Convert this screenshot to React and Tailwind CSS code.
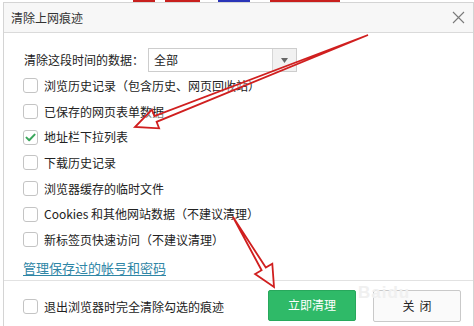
import React from "react";

const font = { fontFamily: '"Noto Sans CJK SC", "Noto Sans", sans-serif' };

function Box({ checked }) {
  return (
    <div className="w-[15px] h-[15px] shrink-0 rounded-[3px] border border-[#c4c4c4] bg-white flex items-center justify-center">
      {checked && (
        <svg width="11" height="9" viewBox="0 0 11 9">
          <path d="M1.5 4.6 L4.2 7.2 L9.6 1.6" fill="none" stroke="#3aa65c" strokeWidth="2" strokeLinecap="round" strokeLinejoin="round" />
        </svg>
      )}
    </div>
  );
}

function Row({ checked, children }) {
  return (
    <div className="h-[25.7px] flex items-center">
      <Box checked={checked} />
      <span className="ml-[6px] text-[12px] text-[#222] leading-none whitespace-nowrap">{children}</span>
    </div>
  );
}

export default function App() {
  const rows = [
    ["浏览历史记录（包含历史、网页回收站）", false],
    ["已保存的网页表单数据", false],
    ["地址栏下拉列表", true],
    ["下载历史记录", false],
    ["浏览器缓存的临时文件", false],
    ["Cookies 和其他网站数据（不建议清理）", false],
    ["新标签页快速访问（不建议清理）", false],
  ];
  return (
    <div className="w-[474px] h-[326px] overflow-hidden bg-white relative" style={font}>
      <div className="h-[2px] flex">
        <div className="w-[133px]" />
        <div className="w-[22px] bg-[#c8201e]" />
        <div className="w-[10px]" />
        <div className="w-[35px] bg-[#c8201e]" />
        <div className="w-[18px]" />
        <div className="w-[32px] bg-[#2a35b8]" />
        <div className="w-[20px]" />
        <div className="w-[70px] bg-[#c8201e]" />
      </div>
      <div className="ml-[3px] w-[471px] h-[324px] border border-b-0 border-[#d4d4d4] bg-white flex flex-col">
        <div className="h-[30px] shrink-0 bg-[#f7f7f7] border-b border-[#dadada] flex items-center justify-between pl-[7px] pr-[8px]">
          <span className="text-[12px] text-[#333] leading-none">清除上网痕迹</span>
          <svg width="13" height="13" viewBox="0 0 13 13">
            <path d="M1 1 L12 12 M12 1 L1 12" stroke="#7a7a7a" strokeWidth="1.1" />
          </svg>
        </div>
        <div className="pl-[19px] pt-[15px]">
          <div className="h-[24px] flex items-center">
            <span className="w-[125px] pl-[1px] text-[12px] text-[#222] leading-none whitespace-nowrap">清除这段时间的数据：</span>
            <div className="w-[149px] h-[24px] border border-[#cdcdcd] flex items-stretch bg-white">
              <div className="flex-1 flex items-center pl-[5px] text-[12px] text-[#222]">全部</div>
              <div className="w-[24px] bg-[#f1f1f1] border-l border-[#d6d6d6] flex items-center justify-center">
                <svg width="7" height="5" viewBox="0 0 7 5">
                  <path d="M0 0 L7 0 L3.5 5 Z" fill="#666" />
                </svg>
              </div>
            </div>
          </div>
          <div className="mt-[1px]">
            {rows.map(([t, c]) => (
              <Row key={t} checked={c}>{t}</Row>
            ))}
          </div>
          <div className="h-[24px] mt-[3px] flex items-center">
            <span className="text-[13px] text-[#2f86a6] underline underline-offset-2 leading-none">管理保存过的帐号和密码</span>
          </div>
        </div>
        <div className="border-t border-[#e2e2e2] flex items-start pt-[9px] pl-[19px] pr-[12px]">
          <div className="flex-1 h-[31px] flex items-center pt-[3px]">
            <Box />
            <span className="ml-[6px] text-[12px] text-[#222] leading-none whitespace-nowrap">退出浏览器时完全清除勾选的痕迹</span>
          </div>
          <button className="w-[88px] h-[31px] rounded-[2px] bg-[#2fba68] border border-[#28a85c] text-white text-[12px] leading-none">立即清理</button>
          <button className="ml-[17px] w-[88px] h-[32px] rounded-[2px] bg-[#fafafa] border border-[#c9c9c9] text-[#222] text-[12px] leading-none tracking-[5px] pl-[5px]">关闭</button>
        </div>
      </div>
      <div className="absolute left-[358px] top-[284px] text-[17px] font-bold leading-none text-[#f0f0f0] tracking-[1px] pointer-events-none" style={{ fontFamily: '"Liberation Sans", sans-serif' }}>
        Baidu
      </div>
      <svg className="absolute left-0 top-0 pointer-events-none" width="474" height="326" viewBox="0 0 474 326">
        <polygon
          points="368,35 154.4,116.2 151.9,109.7 135,127 159.1,128.3 156.6,121.8"
          fill="rgba(255,255,255,0.4)"
          stroke="#d01f1f"
          strokeWidth="1.8"
          strokeLinejoin="miter"
        />
        <polygon
          points="233,217 261.6,270.2 255.1,274.1 274,287 272.3,263.7 265.8,267.6"
          fill="rgba(255,255,255,0.4)"
          stroke="#d01f1f"
          strokeWidth="1.8"
          strokeLinejoin="miter"
        />
      </svg>
    </div>
  );
}
